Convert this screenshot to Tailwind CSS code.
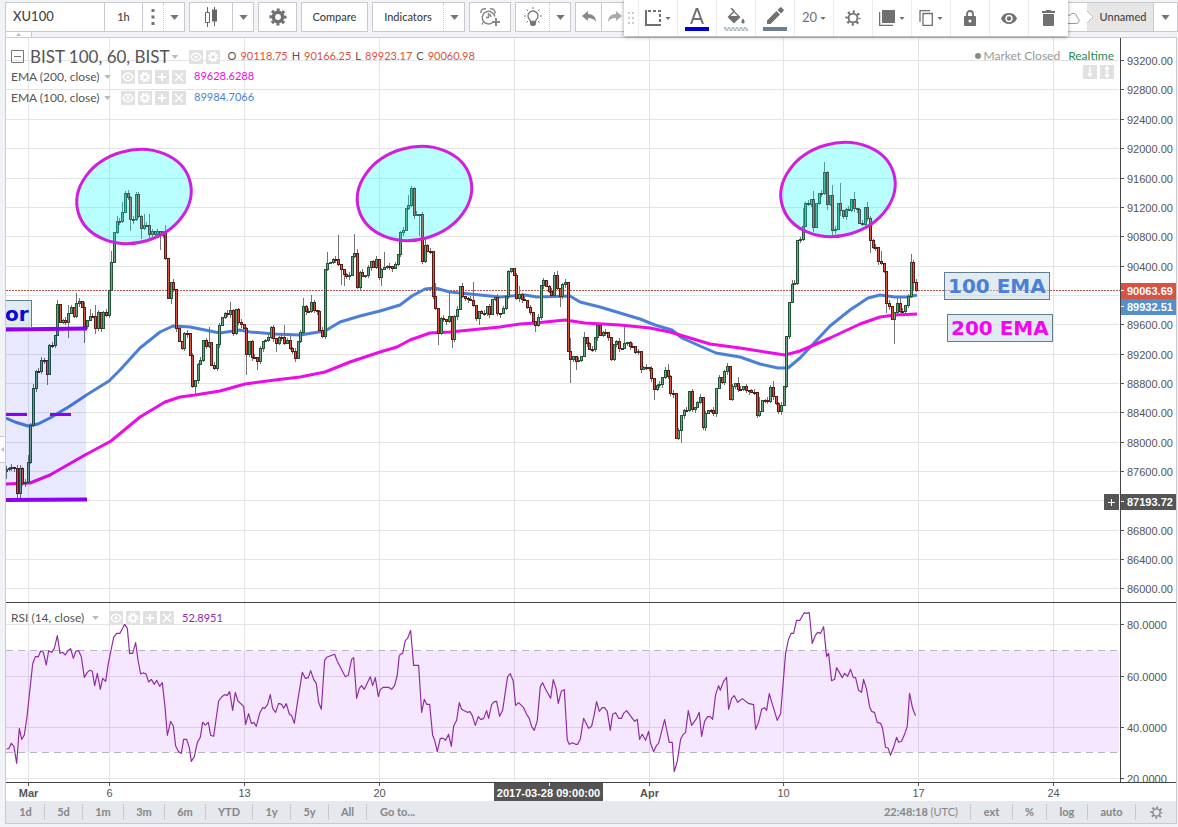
<!DOCTYPE html>
<html lang="en">
<head>
  <meta charset="UTF-8">
  <meta name="viewport" content="width=device-width, initial-scale=1.0">
  <title>XU100 - BIST 100 Chart</title>
  <script src="https://cdn.jsdelivr.net/npm/@tailwindcss/browser@4"></script>
</head>
<body class="relative flex h-screen flex-col overflow-hidden bg-[#f1f3f6] font-['Lato',sans-serif] text-[#555]">

  <!-- icon sprites -->
  <svg class="hidden">
    <symbol id="caret" viewBox="0 0 10 6"><path d="M0 0h10L5 6z" fill="currentColor"/></symbol>
    <symbol id="gear" viewBox="0 0 18 18">
      <circle cx="9" cy="9" r="4.7" fill="none" stroke="currentColor" stroke-width="3.6"/>
      <circle cx="9" cy="9" r="7.3" fill="none" stroke="currentColor" stroke-width="2.6" stroke-dasharray="3 2.733" stroke-dashoffset="1.5"/>
    </symbol>
    <symbol id="gear-line" viewBox="0 0 18 18">
      <circle cx="9" cy="9" r="5" fill="none" stroke="currentColor" stroke-width="2"/>
      <circle cx="9" cy="9" r="7.2" fill="none" stroke="currentColor" stroke-width="2.8" stroke-dasharray="2.4 3.255" stroke-dashoffset="1.2"/>
    </symbol>
    <symbol id="mini-eye" viewBox="0 0 14 14"><path fill="#e1e1e1" d="M0 0h14v14H0z"/><path d="M2 7c2.500-5 7.500-5 10 0c-2.500 5-7.500 5-10 0z" fill="none" stroke="#fff" stroke-width="1.500"/><circle cx="7" cy="7" r="1.600" fill="#fff"/></symbol>
    <symbol id="mini-gear" viewBox="0 0 14 14"><path fill="#e1e1e1" d="M0 0h14v14H0z"/><circle cx="7" cy="7" r="2.900" fill="none" stroke="#fff" stroke-width="2"/><circle cx="7" cy="7" r="4.600" fill="none" stroke="#fff" stroke-width="1.700" stroke-dasharray="1.800 1.813"/></symbol>
    <symbol id="mini-plus" viewBox="0 0 14 14"><path fill="#e1e1e1" d="M0 0h14v14H0z"/><path d="M7 3v8M3 7h8" stroke="#fff" stroke-width="2"/></symbol>
    <symbol id="mini-x" viewBox="0 0 14 14"><path fill="#e1e1e1" d="M0 0h14v14H0z"/><path d="M3 3l8 8M11 3l-8 8" stroke="#fff" stroke-width="1.500"/></symbol>
  </svg>

  <!-- top toolbar -->
  <header class="flex h-[32px] shrink-0 items-stretch gap-1 pt-[2px] pl-[5px] text-[11px] font-medium text-[#444] [&_svg]:shrink-0">
    <div class="flex border border-[#c8cacd] bg-white">
      <input type="text" value="XU100" aria-label="Symbol" class="w-[99px] border-r border-[#c8cacd] px-[7px] text-[13px] outline-none">
      <button class="w-[38px] border-r border-[#c8cacd]">1h</button>
      <button class="grid w-[21px] place-items-center border-r border-dotted border-[#c8cacd]" aria-label="Intervals"><svg class="h-4 w-1 text-[#757575]" viewBox="0 0 4 16" fill="currentColor"><path d="M.5 0h3v3h-3zM.5 6.500h3v3h-3zM.5 13h3v3h-3z"/></svg></button>
      <button class="grid w-[20px] place-items-center text-[#757575]" aria-label="More intervals"><svg class="h-[5px] w-[9px]"><use href="#caret"/></svg></button>
    </div>
    <div class="flex border border-[#c8cacd] bg-white">
      <button class="grid w-[43px] place-items-center border-r border-[#c8cacd]" aria-label="Bar style"><svg class="h-5 w-3 text-[#666]" viewBox="0 0 12 20"><path d="M2.500 0v5M2.500 16v4M9.500 0v3M9.500 14v5" stroke="currentColor"/><path d="M.5 5.500h4v10h-4z" fill="none" stroke="currentColor"/><path d="M7 2.500h5v12H7z" fill="currentColor"/></svg></button>
      <button class="grid w-[20px] place-items-center text-[#757575]" aria-label="More styles"><svg class="h-[5px] w-[9px]"><use href="#caret"/></svg></button>
    </div>
    <button class="grid w-[39px] place-items-center border border-[#c8cacd] bg-white text-[#707070]" aria-label="Properties"><svg class="h-[18px] w-[18px]"><use href="#gear"/></svg></button>
    <button class="w-[67px] border border-[#c8cacd] bg-white">Compare</button>
    <div class="flex border border-[#c8cacd] bg-white">
      <button class="w-[71px] border-r border-dotted border-[#c8cacd]">Indicators</button>
      <button class="grid w-[20px] place-items-center text-[#757575]" aria-label="Indicator templates"><svg class="h-[5px] w-[9px]"><use href="#caret"/></svg></button>
    </div>
    <button class="grid w-[42px] place-items-center border border-[#c8cacd] bg-white text-[#888]" aria-label="Alert">
      <svg class="h-5 w-5" viewBox="0 0 20 20" fill="none" stroke="currentColor" stroke-width="1.500"><path d="M13.500 14.600a6.300 6.300 0 1 1 1.300-5M3 15.500l-1 2M1 6c-.5-3 2-5 5-4M15 6.500c.5-3-2-5.500-5-4.500M8.500 6v4.500L6 10.500M11 10l-1-3"/><path d="M16 11v8M12 15h8" stroke-width="2"/></svg></button>
    <div class="flex border border-[#c8cacd] bg-white">
      <button class="grid w-[34px] place-items-center border-r border-dotted border-[#c8cacd] text-[#777]" aria-label="Ideas"><svg class="h-5 w-5" viewBox="0 0 20 20" fill="none" stroke="currentColor"><path d="M7.500 14.500c0-2-2.500-2.500-2.500-5.500a5 5 0 0 1 10 0c0 3-2.500 3.500-2.500 5.500z" stroke-width="1.300"/><path d="M7.500 14.500h5v3l-1 1h-3l-1-1z" fill="currentColor"/><path d="M10 0v2M3.500 2.500l1.500 1.500M16.500 2.500L15 4M1 9h2M17 9h2M3.500 15.500L5 14M16.500 15.500L15 14"/></svg></button>
      <button class="grid w-[20px] place-items-center text-[#757575]" aria-label="More ideas"><svg class="h-[5px] w-[9px]"><use href="#caret"/></svg></button>
    </div>
    <div class="flex border border-[#c8cacd] bg-white">
      <button class="grid w-[26px] place-items-center border-r border-[#c8cacd] text-[#888]" aria-label="Undo"><svg class="h-3 w-[14px]" viewBox="0 0 14 12" fill="currentColor"><path d="M6 0v3c5 0 8 3 8 8-2-3-4-4-8-4v3L0 5z"/></svg></button>
      <button class="grid w-[26px] place-items-center text-[#aaa]" aria-label="Redo"><svg class="h-3 w-[14px]" viewBox="0 0 14 12" fill="currentColor"><path d="M8 0v3C3 3 0 6 0 11c2-3 4-4 8-4v3l6-5z"/></svg></button>
    </div>
    <div class="ml-auto flex border border-[#c8cacd] bg-white">
      <button class="grid w-[36px] place-items-center text-[#999]" aria-label="Save"><svg class="h-4 w-6" viewBox="0 0 24 16" fill="none" stroke="currentColor"><path d="M6 14.500h13c4 0 4-5 1-6c0-4-5-6-7-2c-2-1-4 0-4 2c-6-.5-6 6-3 6z"/></svg></button>
      <button class="relative w-[67px] border-r border-[#c8cacd] bg-[#e6e6e6] pl-[6px]"><svg class="absolute top-0 left-0 h-full w-[7px]" viewBox="0 0 7 28" preserveAspectRatio="none"><path d="M0 0v8l6 6-6 6v8z" fill="#fff"/><path d="M0 8l6 6-6 6" fill="none" stroke="#c0c0c0"/></svg>Unnamed</button>
      <button class="grid w-[23px] place-items-center text-[#757575]" aria-label="Layouts"><svg class="h-[5px] w-[9px]"><use href="#caret"/></svg></button>
    </div>
  </header>

  <!-- floating drawing toolbar -->
  <div class="absolute top-0 left-[624px] z-10 flex h-[36px] divide-x divide-[#ececec] bg-white text-[#707070] shadow-[0_1px_4px_rgba(0,0,0,0.4)]">
    <span class="grid w-[15px] place-items-center"><svg class="h-3 w-[6px]" viewBox="0 0 6 12" fill="#ccc"><path d="M0 0h2v2H0zM4 0h2v2H4zM0 5h2v2H0zM4 5h2v2H4zM0 10h2v2H0zM4 10h2v2H4z"/></svg></span>
    <button class="flex w-[39px] items-center justify-center gap-1" aria-label="Template"><svg class="h-4 w-4" viewBox="0 0 16 16" fill="none" stroke="currentColor" stroke-width="2"><path d="M1 0v15h15"/><path d="M3 1h12v14" stroke-dasharray="3 2"/></svg><svg class="h-[3px] w-[6px]"><use href="#caret"/></svg></button>
    <button class="flex w-[39px] flex-col items-center justify-end gap-[3px] pb-[5px]" aria-label="Text color"><svg class="h-4 w-[14px]" viewBox="0 0 14 16" fill="none" stroke="currentColor" stroke-width="2"><path d="M1 16L6.500 1h1L13 16M3 11h8"/></svg><i class="h-1 w-6 bg-[#0000d8]"></i></button>
    <button class="flex w-[39px] flex-col items-center justify-end gap-[3px] pb-[5px]" aria-label="Background color"><svg class="h-4 w-[18px]" viewBox="0 0 18 16"><path d="M4 0l9.500 9L7 15.500.5 9 6 3.500M3.500 8h7L7 4.500z" fill="currentColor" fill-rule="evenodd"/><path d="M4 0l3.500 3.500" stroke="currentColor" stroke-width="1.500"/><path d="M16 10.500c3 4 1 5 0 5s-3-1 0-5z" fill="currentColor"/></svg><svg class="h-1 w-6" viewBox="0 0 24 4"><path fill="#dfe5e9" d="M0 0h24v4H0z"/><path d="M0 1h24" stroke="#b5bfc7" stroke-width="2" stroke-dasharray="2 2"/><path d="M2 3h22" stroke="#b5bfc7" stroke-width="2" stroke-dasharray="2 2"/></svg></button>
    <button class="flex w-[39px] flex-col items-center justify-end gap-[3px] pb-[5px]" aria-label="Line color"><svg class="h-[17px] w-[17px]" viewBox="0 0 17 17" fill="currentColor"><path d="M0 13.500V17h3.500L13 7.500 9.500 4zM10.500 3L14 6.500l2.500-2.500c.5-.5.5-1 0-1.500L14.500.5c-.5-.5-1-.5-1.500 0z"/></svg><i class="h-1 w-6 bg-[#6b7f8e]"></i></button>
    <button class="flex w-[39px] items-center justify-center gap-[3px] text-[13px]">20<svg class="h-[3px] w-[6px]"><use href="#caret"/></svg></button>
    <button class="grid w-[39px] place-items-center" aria-label="Settings"><svg class="h-4 w-4"><use href="#gear-line"/></svg></button>
    <button class="flex w-[39px] items-center justify-center gap-1" aria-label="Visual order"><svg class="h-4 w-4" viewBox="0 0 16 16"><path d="M3 0h13v13H3z" fill="currentColor"/><path d="M.5 2v13.500H14" fill="none" stroke="currentColor" stroke-width="1.500"/></svg><svg class="h-[3px] w-[6px]"><use href="#caret"/></svg></button>
    <button class="flex w-[39px] items-center justify-center gap-1" aria-label="Clone"><svg class="h-4 w-[14px]" viewBox="0 0 14 16" fill="none" stroke="currentColor" stroke-width="1.300"><path d="M4 3.500h9.300v11.800H4zM1 12V.7h10"/></svg><svg class="h-[3px] w-[6px]"><use href="#caret"/></svg></button>
    <button class="grid w-[39px] place-items-center" aria-label="Lock"><svg class="h-4 w-3" viewBox="0 0 12 16"><path d="M3 7V4a3 3 0 0 1 6 0v3" fill="none" stroke="currentColor" stroke-width="1.800"/><path d="M1 6h10q1 0 1 1v8q0 1-1 1H1q-1 0-1-1V7q0-1 1-1z" fill="currentColor"/><circle cx="6" cy="11" r="1.500" fill="#fff"/></svg></button>
    <button class="grid w-[39px] place-items-center" aria-label="Hide"><svg class="h-[11px] w-4" viewBox="0 0 16 11"><path d="M0 5.500c3-7.300 13-7.300 16 0c-3 7.300-13 7.300-16 0z" fill="currentColor"/><circle cx="8" cy="5.500" r="3.700" fill="#fff"/><circle cx="8" cy="5.500" r="2.200" fill="currentColor"/></svg></button>
    <button class="grid w-[39px] place-items-center" aria-label="Remove"><svg class="h-4 w-[13px]" viewBox="0 0 13 16" fill="currentColor"><path d="M4.500 0h4l1 1H13v2H0V1h3.500zM1 4h11v11q0 1-1 1H2q-1 0-1-1z"/></svg></button>
  </div>

  <div class="h-[5px] shrink-0 pl-[5px]">
    <button class="grid h-full w-[27px] place-items-center border-x border-[#c8cacd] bg-white text-[#bbb]" aria-label="Collapse toolbar"><svg class="h-[3px] w-[5px] rotate-180"><use href="#caret"/></svg></button>
  </div>

  <!-- chart -->
  <main class="mr-px ml-[5px] grid min-h-0 flex-1 grid-cols-[minmax(0,1fr)_56px] grid-rows-[minmax(0,1fr)_180px_18px] border-t border-r border-l border-[#c8cacd] bg-white">
    <section class="relative min-h-0 border-b border-[#444]">
      <svg class="absolute inset-0 h-full w-full" shape-rendering="crispEdges">
        <g transform="translate(-6 -38)">
          <g id="grid" stroke="#e3e4e5"></g>
          <path d="M6 290.500H1120" stroke="#b4564c" stroke-dasharray="2 1"/>
          <g fill="none" stroke-width="3" stroke-linejoin="round" shape-rendering="auto">
            <polyline stroke="#4a80d8" points="6,418 15,422 28,426 38,424 50,418 70,406 88,394 109,381 120,370 140,348 160,332 173,326 190,327 210,331 220,333 240,330 250,332 275,334 300,335 325,331 340,322 360,316 380,311 400,305 412,296 425,289 435,288 450,292 470,294 500,297 525,295 537,297 570,296 580,302 600,307 620,313 640,319 655,325 672,330 682,338 700,346 716,353 740,357 760,364 778,368 788,368 800,358 815,342 830,326 850,310 868,298 880,295 895,297 908,297 917,295"/>
            <polyline stroke="#ec0ce6" points="6,484 30,483 50,475 85,455 111,441 140,417 165,402 180,397 195,395 220,391 245,384 275,380 300,377 325,372 350,362 380,352 397,347 410,340 430,333 450,332 470,330 500,327 520,324 535,323 565,320 585,323 620,325 650,328 670,332 690,338 710,344 740,348 765,352 785,355 800,351 830,338 860,324 880,317 895,315 917,314"/>
          </g>
          <g id="candles"></g>
          <path d="M6 329H86V500H6z" fill="#0000ff" fill-opacity=".09"/>
          <path d="M6 329.500L87 328.500M6 500L87 499.500" stroke="#8f00f0" stroke-width="4" shape-rendering="auto"/>
          <path d="M6 414.500H27M50 414.500H71" stroke="#8f00f0" stroke-width="3"/>
          <g fill="#00ffff" fill-opacity=".27" stroke="#d01fe0" stroke-width="3" shape-rendering="auto">
            <ellipse cx="134" cy="196.500" rx="58" ry="46" transform="rotate(-16 134 196.500)"/>
            <ellipse cx="414.500" cy="193.500" rx="58" ry="46" transform="rotate(-16 414.500 193.500)"/>
            <ellipse cx="838" cy="189.500" rx="58" ry="46" transform="rotate(-16 838 189.500)"/>
          </g>
          <g fill="#c3d7e6" fill-opacity=".5" stroke="#627d90">
            <path d="M-10 300.500H31.500V327.500H-10z"/>
            <path d="M944.500 272.500H1049.500V299.500H944.500z"/>
            <path d="M947.500 314.500H1052.500V341.500H947.500z"/>
          </g>
          <g class="font-['DejaVu_Sans',sans-serif] text-[20px] font-bold">
            <text x="5" y="321" fill="#0808d8">or</text>
            <text x="948" y="293" fill="#4a80d8">100 EMA</text>
            <text x="951" y="335" fill="#f505ee">200 EMA</text>
          </g>
        </g>
      </svg>

      <div class="absolute top-[9px] left-[5px] flex flex-col text-[12px]">
        <div class="flex h-[19px] items-center">
          <button aria-label="Collapse legend"><svg class="h-[13px] w-[13px]" viewBox="0 0 13 13" fill="none" stroke="#777"><path d="M.5 .5h12v12H.5zM3 6.500h7"/></svg></button>
          <h1 class="ml-[6px] text-[17px]">BIST 100, 60, BIST</h1>
          <svg class="ml-px h-1 w-2 text-[#bbb]"><use href="#caret"/></svg>
          <button class="ml-[10px]" aria-label="Hide"><svg class="h-[14px] w-[14px]"><use href="#mini-eye"/></svg></button>
          <button class="ml-[3px]" aria-label="Format"><svg class="h-[14px] w-[14px]"><use href="#mini-gear"/></svg></button>
          <p class="ml-[8px] flex gap-1 text-[11px] text-[#d75442]"><span class="text-[#555]">O</span>90118.75 <span class="text-[#555]">H</span>90166.25 <span class="text-[#555]">L</span>89923.17 <span class="text-[#555]">C</span>90060.98</p>
        </div>
        <div class="flex h-[21px] items-center">
          <span class="w-[93px]">EMA (200, close)</span>
          <svg class="h-1 w-[7px] text-[#bbb]"><use href="#caret"/></svg>
          <span class="ml-[10px] flex gap-[3px]">
            <button aria-label="Hide"><svg class="h-[14px] w-[14px]"><use href="#mini-eye"/></svg></button>
            <button aria-label="Format"><svg class="h-[14px] w-[14px]"><use href="#mini-gear"/></svg></button>
            <button aria-label="Add"><svg class="h-[14px] w-[14px]"><use href="#mini-plus"/></svg></button>
            <button aria-label="Remove"><svg class="h-[14px] w-[14px]"><use href="#mini-x"/></svg></button>
          </span>
          <span class="ml-[8px] text-[11px] text-[#ec0ce6]">89628.6288</span>
        </div>
        <div class="flex h-[21px] items-center">
          <span class="w-[93px]">EMA (100, close)</span>
          <svg class="h-1 w-[7px] text-[#bbb]"><use href="#caret"/></svg>
          <span class="ml-[10px] flex gap-[3px]">
            <button aria-label="Hide"><svg class="h-[14px] w-[14px]"><use href="#mini-eye"/></svg></button>
            <button aria-label="Format"><svg class="h-[14px] w-[14px]"><use href="#mini-gear"/></svg></button>
            <button aria-label="Add"><svg class="h-[14px] w-[14px]"><use href="#mini-plus"/></svg></button>
            <button aria-label="Remove"><svg class="h-[14px] w-[14px]"><use href="#mini-x"/></svg></button>
          </span>
          <span class="ml-[8px] text-[11px] text-[#4a80d8]">89984.7066</span>
        </div>
      </div>

      <div class="absolute top-[9px] right-[6px] flex flex-col items-end text-[12px]">
        <p class="flex h-[18px] items-center gap-[8px] text-[#999]"><span class="flex items-center gap-[3px]"><i class="h-[6px] w-[6px] rounded-full bg-[#888]"></i>Market Closed</span><span class="text-[#2c8a58]">Realtime</span></p>
        <div class="flex gap-[3px]">
          <button aria-label="Scroll down"><svg class="h-[14px] w-[14px]" viewBox="0 0 14 14"><path fill="#e1e1e1" d="M0 0h14v14H0z"/><path d="M7 2v9M5 8.500l2 2.500 2-2.500" fill="none" stroke="#fff" stroke-width="1.500"/></svg></button>
          <button aria-label="Auto fit"><svg class="h-[14px] w-[14px]" viewBox="0 0 14 14"><path fill="#e1e1e1" d="M0 0h14v14H0z"/><path d="M7 2v10M5 4.500L7 2l2 2.500M5 9.500L7 12l2-2.500" fill="none" stroke="#fff" stroke-width="1.500"/></svg></button>
        </div>
      </div>
      <button class="absolute top-[456px] right-px grid h-4 w-[15px] place-items-center bg-[#555]" aria-label="Add at price"><svg class="h-[7px] w-[7px]" viewBox="0 0 7 7" stroke="#fff"><path d="M3.500 0v7M0 3.500h7"/></svg></button>
    </section>

    <!-- price scale -->
    <section class="relative min-h-0 border-b border-l border-[#444]">
      <svg class="absolute inset-0 h-full w-full font-['Liberation_Sans',sans-serif] text-[11px]" fill="#555">
        <g transform="translate(0 -38)">
          <g id="prices"></g>
          <g font-weight="bold" fill="#fff">
            <path d="M0 283h56v16H0z" fill="#d75442"/><path d="M0 290.500h3" stroke="#fff"/><text x="6" y="295">90063.69</text>
            <path d="M0 299h56v16H0z" fill="#5590c9"/><path d="M0 306.500h3" stroke="#fff"/><text x="6" y="311">89932.51</text>
            <path d="M0 494h56v16H0z" fill="#555"/><path d="M0 501.500h3" stroke="#fff"/><text x="6" y="506">87193.72</text>
          </g>
        </g>
      </svg>
    </section>

    <!-- RSI -->
    <section class="relative border-b border-[#444]">
      <svg class="absolute inset-0 h-full w-full">
        <g transform="translate(-6 -603)">
          <g id="rsi-grid" stroke="#e3e4e5" shape-rendering="crispEdges"></g>
          <path d="M6 651H1119V752H6z" fill="#9915ff" fill-opacity=".1"/>
          <path d="M6 650.500H1119M6 752.500H1119" stroke="#bbb3c2" stroke-dasharray="7 5"/>
        </g>
        <g transform="translate(-6 -3) scale(.3333)" fill="none" stroke="#8e2ba3" stroke-width="3.500" stroke-linejoin="round">
          <polyline points="20,447 27,445 34,430 42,440 50,490 58,385 65,418 73,405 81,350 98,192 106,170 115,170 122,153 130,157 139,195 146,152 155,157 163,145 172,107 180,160 188,157 196,165 203,153 212,146 220,175 228,153 236,152 244,170 253,232 262,217 269,211 277,214 284,257 292,220 301,268 308,235 317,244 325,190 341,112 350,100 360,100 374,73 382,85 389,160 398,160 407,128 414,180 422,222 430,218 438,222 446,246 454,238 463,253 470,241 479,259 487,248 495,320 502,406 512,364 520,378 527,438 536,455 544,460 551,418 560,418 568,443 574,484 583,470 592,428 601,412 608,367 616,375 625,367 632,406 641,409 656,303 664,292 674,284 682,286 689,275 698,331 706,277 714,303 731,319 737,373 746,341 754,370 762,368 769,379 779,340 788,323 794,325 803,313 811,284 818,325 827,337 836,310 845,313 851,325 859,311 868,342 875,347 883,370 892,310 907,217 916,235 925,233 932,212 941,238 949,250 956,307 964,328 974,181 980,172 1004,163 1012,184 1036,230 1045,226 1055,178 1061,173 1070,295 1078,265 1085,257 1093,268 1111,230 1118,257 1126,233 1135,290 1141,269 1150,262 1166,262 1175,268 1184,256 1192,225 1198,166"/>
          <polyline transform="translate(1170 0)" points="28,166 38,160 46,122 53,115 62,91 71,196 86,196 95,337 103,298 110,313 119,313 128,406 134,421 142,455 151,415 160,415 167,421 176,403 184,439 191,379 200,361 208,308 215,328 232,337 240,335 247,347 256,376 265,350 272,358 281,356 290,332 296,355 305,314 313,305 320,304 329,349 338,331 353,230 361,221 370,244 377,316 386,308 401,323 410,343 418,355 425,380 433,391 442,362 451,260 458,248 467,268 482,295 490,239 499,268 505,310 514,274 523,269 532,420 538,433 548,428 557,433 563,433 571,418 581,355 596,385 605,379 613,343 620,305 628,334 637,323 644,323 652,334 661,391 668,343 677,338 686,355 695,355 701,340 710,332 734,364 742,358 749,418 757,403 767,421 776,394 782,430 791,455 800,436 806,430 824,359 838,427 847,427 853,515 862,484 872,418 880,403 887,397 895,332 905,376 920,355 928,337 935,409 944,364 953,350 961,350 968,358 977,284 986,257 991,271 1001,244 1010,232 1016,328 1025,295 1033,287 1043,307 1057,296 1075,310 1091,314 1097,388 1106,367 1115,328 1124,323 1130,331 1138,281 1145,305 1162,361 1172,341 1187,160 1196,117"/>
          <polyline transform="translate(2340 0)" points="26,117 34,100 41,100 50,61 60,61 73,38 80,40 88,38 97,130 106,107 113,97 122,100 131,80 140,169 146,160 155,242 164,238 170,203 187,233 194,220 203,229 212,208 220,232 227,233 236,271 245,277 251,238 260,268 269,320 275,334 284,338 292,367 302,370 308,385 317,442 325,445 332,466 341,442 350,412 356,427 365,424 374,403 382,379 389,280 398,325 407,347"/>
        </g>
      </svg>
      <div class="absolute top-[5px] left-[5px] flex h-[20px] items-center text-[12px]">
        <span class="w-[81px]">RSI (14, close)</span>
        <svg class="h-1 w-[7px] text-[#bbb]"><use href="#caret"/></svg>
        <span class="ml-[10px] flex gap-[3px]">
          <button aria-label="Hide"><svg class="h-[14px] w-[14px]"><use href="#mini-eye"/></svg></button>
          <button aria-label="Format"><svg class="h-[14px] w-[14px]"><use href="#mini-gear"/></svg></button>
          <button aria-label="Add"><svg class="h-[14px] w-[14px]"><use href="#mini-plus"/></svg></button>
          <button aria-label="Remove"><svg class="h-[14px] w-[14px]"><use href="#mini-x"/></svg></button>
        </span>
        <span class="ml-[8px] text-[11px] text-[#8e2ba3]">52.8951</span>
      </div>
    </section>
    <section class="relative overflow-hidden border-b border-l border-[#444]">
      <svg class="absolute inset-0 h-full w-full font-['Liberation_Sans',sans-serif] text-[11px]" fill="#555">
        <g id="rsi-values" transform="translate(0 -603)"></g>
      </svg>
    </section>

    <!-- time scale -->
    <section class="relative">
      <svg class="absolute inset-0 h-full w-full font-['Liberation_Sans',sans-serif] text-[11px]" fill="#555" text-anchor="middle">
        <g id="dates" transform="translate(-6 -783)"></g>
      </svg>
    </section>
    <div></div>
  </main>

  <!-- range bar -->
  <footer class="mr-px mb-[3px] ml-[5px] flex h-[23px] shrink-0 items-center border border-t-0 border-[#c8cacd] bg-[#e5e8ec] pl-px text-[11px] font-bold text-[#848688]">
    <nav class="flex divide-x divide-[#c8cacd]">
      <button class="w-[38px]">1d</button>
      <button class="w-[38px]">5d</button>
      <button class="w-[41px]">1m</button>
      <button class="w-[41px]">3m</button>
      <button class="w-[41px]">6m</button>
      <button class="w-[47px]">YTD</button>
      <button class="w-[38px]">1y</button>
      <button class="w-[38px]">5y</button>
      <button class="w-[38px]">All</button>
      <button class="px-[13px]">Go to...</button>
    </nav>
    <div class="ml-auto flex divide-x divide-[#c8cacd]">
      <button class="px-[12px]">22:48:18 <span class="font-normal">(UTC)</span></button>
      <button class="w-[42px]">ext</button>
      <button class="w-[34px]">%</button>
      <button class="w-[41px]">log</button>
      <button class="w-[48px]">auto</button>
      <button class="grid w-[40px] place-items-center" aria-label="Scale settings"><svg class="h-[13px] w-[13px]"><use href="#gear-line"/></svg></button>
    </div>
  </footer>

  <button class="absolute top-[436px] left-0 grid h-[27px] w-[5px] place-items-center border-y border-[#c8cacd] bg-white text-[#bbb]" aria-label="Show drawing tools"><svg class="h-[5px] w-[3px]" viewBox="0 0 3 5" fill="currentColor"><path d="M3 0v5L0 2.500z"/></svg></button>

  <script>
    // close of each bar as a y position, one bar every 2.7px
    const closes = [
      470,469,468,469,494,469,484,483,463,426,389,372,372,361,361,375,346,346,336,305,323,321,323,314,308,317,304,302,308,327,
      321,317,317,329,313,329,313,316,291,263,233,222,222,213,194,198,220,220,195,217,229,226,226,235,232,235,232,236,232,259,
      299,283,290,329,342,349,334,334,356,387,381,365,361,341,347,343,366,369,345,326,318,314,315,311,334,310,323,325,329,355,
      342,358,358,362,349,342,341,338,328,339,344,338,338,344,341,349,352,359,342,333,307,312,312,303,311,312,331,337,270,264,
      263,260,260,265,270,275,277,276,257,254,288,273,277,276,268,262,268,260,278,270,268,267,267,269,265,255,233,231,209,206,
      189,216,215,215,262,246,252,252,297,309,334,319,320,322,317,340,317,310,287,297,299,300,301,306,319,312,314,314,307,315,
      300,298,314,314,309,297,272,269,276,299,295,300,301,308,313,322,326,318,286,281,287,292,296,276,289,297,285,283,352,360,
      357,362,361,357,338,344,350,350,338,326,336,333,333,338,360,345,342,349,349,344,343,347,347,353,352,370,368,368,369,379,
      390,386,385,378,371,377,394,394,439,431,416,411,411,392,410,408,403,398,428,414,411,411,414,389,378,383,372,367,400,387,
      384,390,390,387,391,391,393,393,416,412,401,401,402,388,397,404,412,406,387,337,303,285,284,241,240,227,204,205,200,228,
      204,194,194,173,205,196,231,230,204,211,217,210,211,200,209,210,224,225,208,219,241,248,248,262,264,272,304,307,320,313,
      304,312,312,306,297,263,283,291
    ];
    // bars with a long wick: index -> [high, low]
    const wicks = {
      0:[466,479],4:[465,499],5:[465,498],8:[455,484],10:[384,427],13:[357,374],15:[360,385],19:[300,336],23:[305,338],26:[293,318],29:[302,343],31:[309,318],33:[305,334],39:[251,291],41:[216,234],43:[202,223],
      45:[190,200],46:[196,231],48:[192,221],50:[215,239],51:[214,230],53:[214,238],56:[229,236],57:[231,250],59:[225,260],61:[282,304],70:[381,394],75:[327,348],76:[342,366],83:[302,318],84:[309,336],89:[327,375],
      93:[358,370],98:[326,339],100:[338,352],103:[325,345],105:[335,350],110:[298,334],113:[295,313],119:[252,271],123:[235,266],124:[264,285],125:[270,286],129:[234,258],130:[249,289],139:[268,286],140:[252,270],
      149:[195,210],150:[186,207],153:[214,236],155:[239,263],159:[283,310],160:[308,345],164:[293,323],165:[317,348],169:[283,298],173:[282,307],174:[305,321],175:[312,325],180:[300,311],187:[268,273],190:[286,302],
      196:[321,332],203:[272,297],204:[271,290],205:[288,307],209:[338,383],211:[357,370],214:[332,357],224:[337,361],229:[327,349],240:[379,400],244:[367,379],245:[364,379],250:[415,443],271:[377,392],279:[397,417],
      283:[385,403],284:[381,400],289:[337,388],291:[280,303],295:[208,241],299:[191,232],301:[193,205],303:[162,195],304:[171,210],306:[185,235],309:[183,216],314:[192,212],319:[202,221],320:[216,253],324:[251,265],
      326:[271,313],329:[313,344],330:[298,314],331:[298,313],335:[254,298],336:[260,290]
    };

    let candles = '';
    closes.forEach((close, i) => {
      const open = i ? closes[i - 1] : 472;
      const x = Math.floor(6.5 + i * 2.7);
      const top = Math.min(open, close);
      const height = Math.max(Math.abs(open - close), 1);
      const wick = wicks[i] || [top - (i * 7) % 5, top + height + (i * 5) % 4];
      const up = close < open;
      candles += `<path d="M${x + .5} ${wick[0]}V${wick[1]}" stroke="#737375"/>`;
      candles += `<rect x="${x - .5}" y="${top - .5}" width="2" height="${height}" fill="${up ? '#6ba583' : '#d75442'}" stroke="${up ? '#225437' : '#5b1a13'}"/>`;
    });
    document.getElementById('candles').innerHTML = candles;

    const days = [[28, 'Mar'], [109, '6'], [244, '13'], [379, '20'], [514, ''], [649, 'Apr'], [783, '10'], [918, '17'], [1053, '24']];
    const rsi = [[624.5, '80.0000'], [676.5, '60.0000'], [727.5, '40.0000'], [778.5, '20.0000']];
    let grid = '', rsiGrid = '', prices = '', values = '', dates = '';

    days.forEach(([x, label]) => {
      grid += `<path d="M${x + .5} 38V602"/>`;
      rsiGrid += `<path d="M${x + .5} 603V781"/>`;
      const bold = /[a-z]/.test(label) ? 'bold' : 'normal';
      dates += `<path d="M${x + .5} 783v3" stroke="#555"/><text x="${x + .5}" y="797" font-weight="${bold}">${label}</text>`;
    });
    dates += '<path d="M494 783h109v18H494z"/><path d="M549.5 783v3" stroke="#fff"/><text x="548.5" y="797" font-weight="bold" fill="#fff">2017-03-28 09:00:00</text>';

    for (let i = 0; i < 19; i++) {
      const y = Math.floor(60.6 + i * 29.35) + .5;
      grid += `<path d="M6 ${y}H1119"/>`;
      // these two sit under the price tags
      if (i === 8 || i === 15) continue;
      prices += `<path d="M0 ${y}h3" stroke="#555"/><text x="6" y="${y + 4}">${93200 - i * 400}.00</text>`;
    }
    rsi.forEach(([y, label]) => {
      rsiGrid += `<path d="M6 ${y}H1119"/>`;
      values += `<path d="M0 ${y}h3" stroke="#555"/><text x="6" y="${y + 4}">${label}</text>`;
    });

    document.getElementById('grid').innerHTML = grid;
    document.getElementById('rsi-grid').innerHTML = rsiGrid;
    document.getElementById('prices').innerHTML = prices;
    document.getElementById('rsi-values').innerHTML = values;
    document.getElementById('dates').innerHTML = dates;
  </script>
</body>
</html>
